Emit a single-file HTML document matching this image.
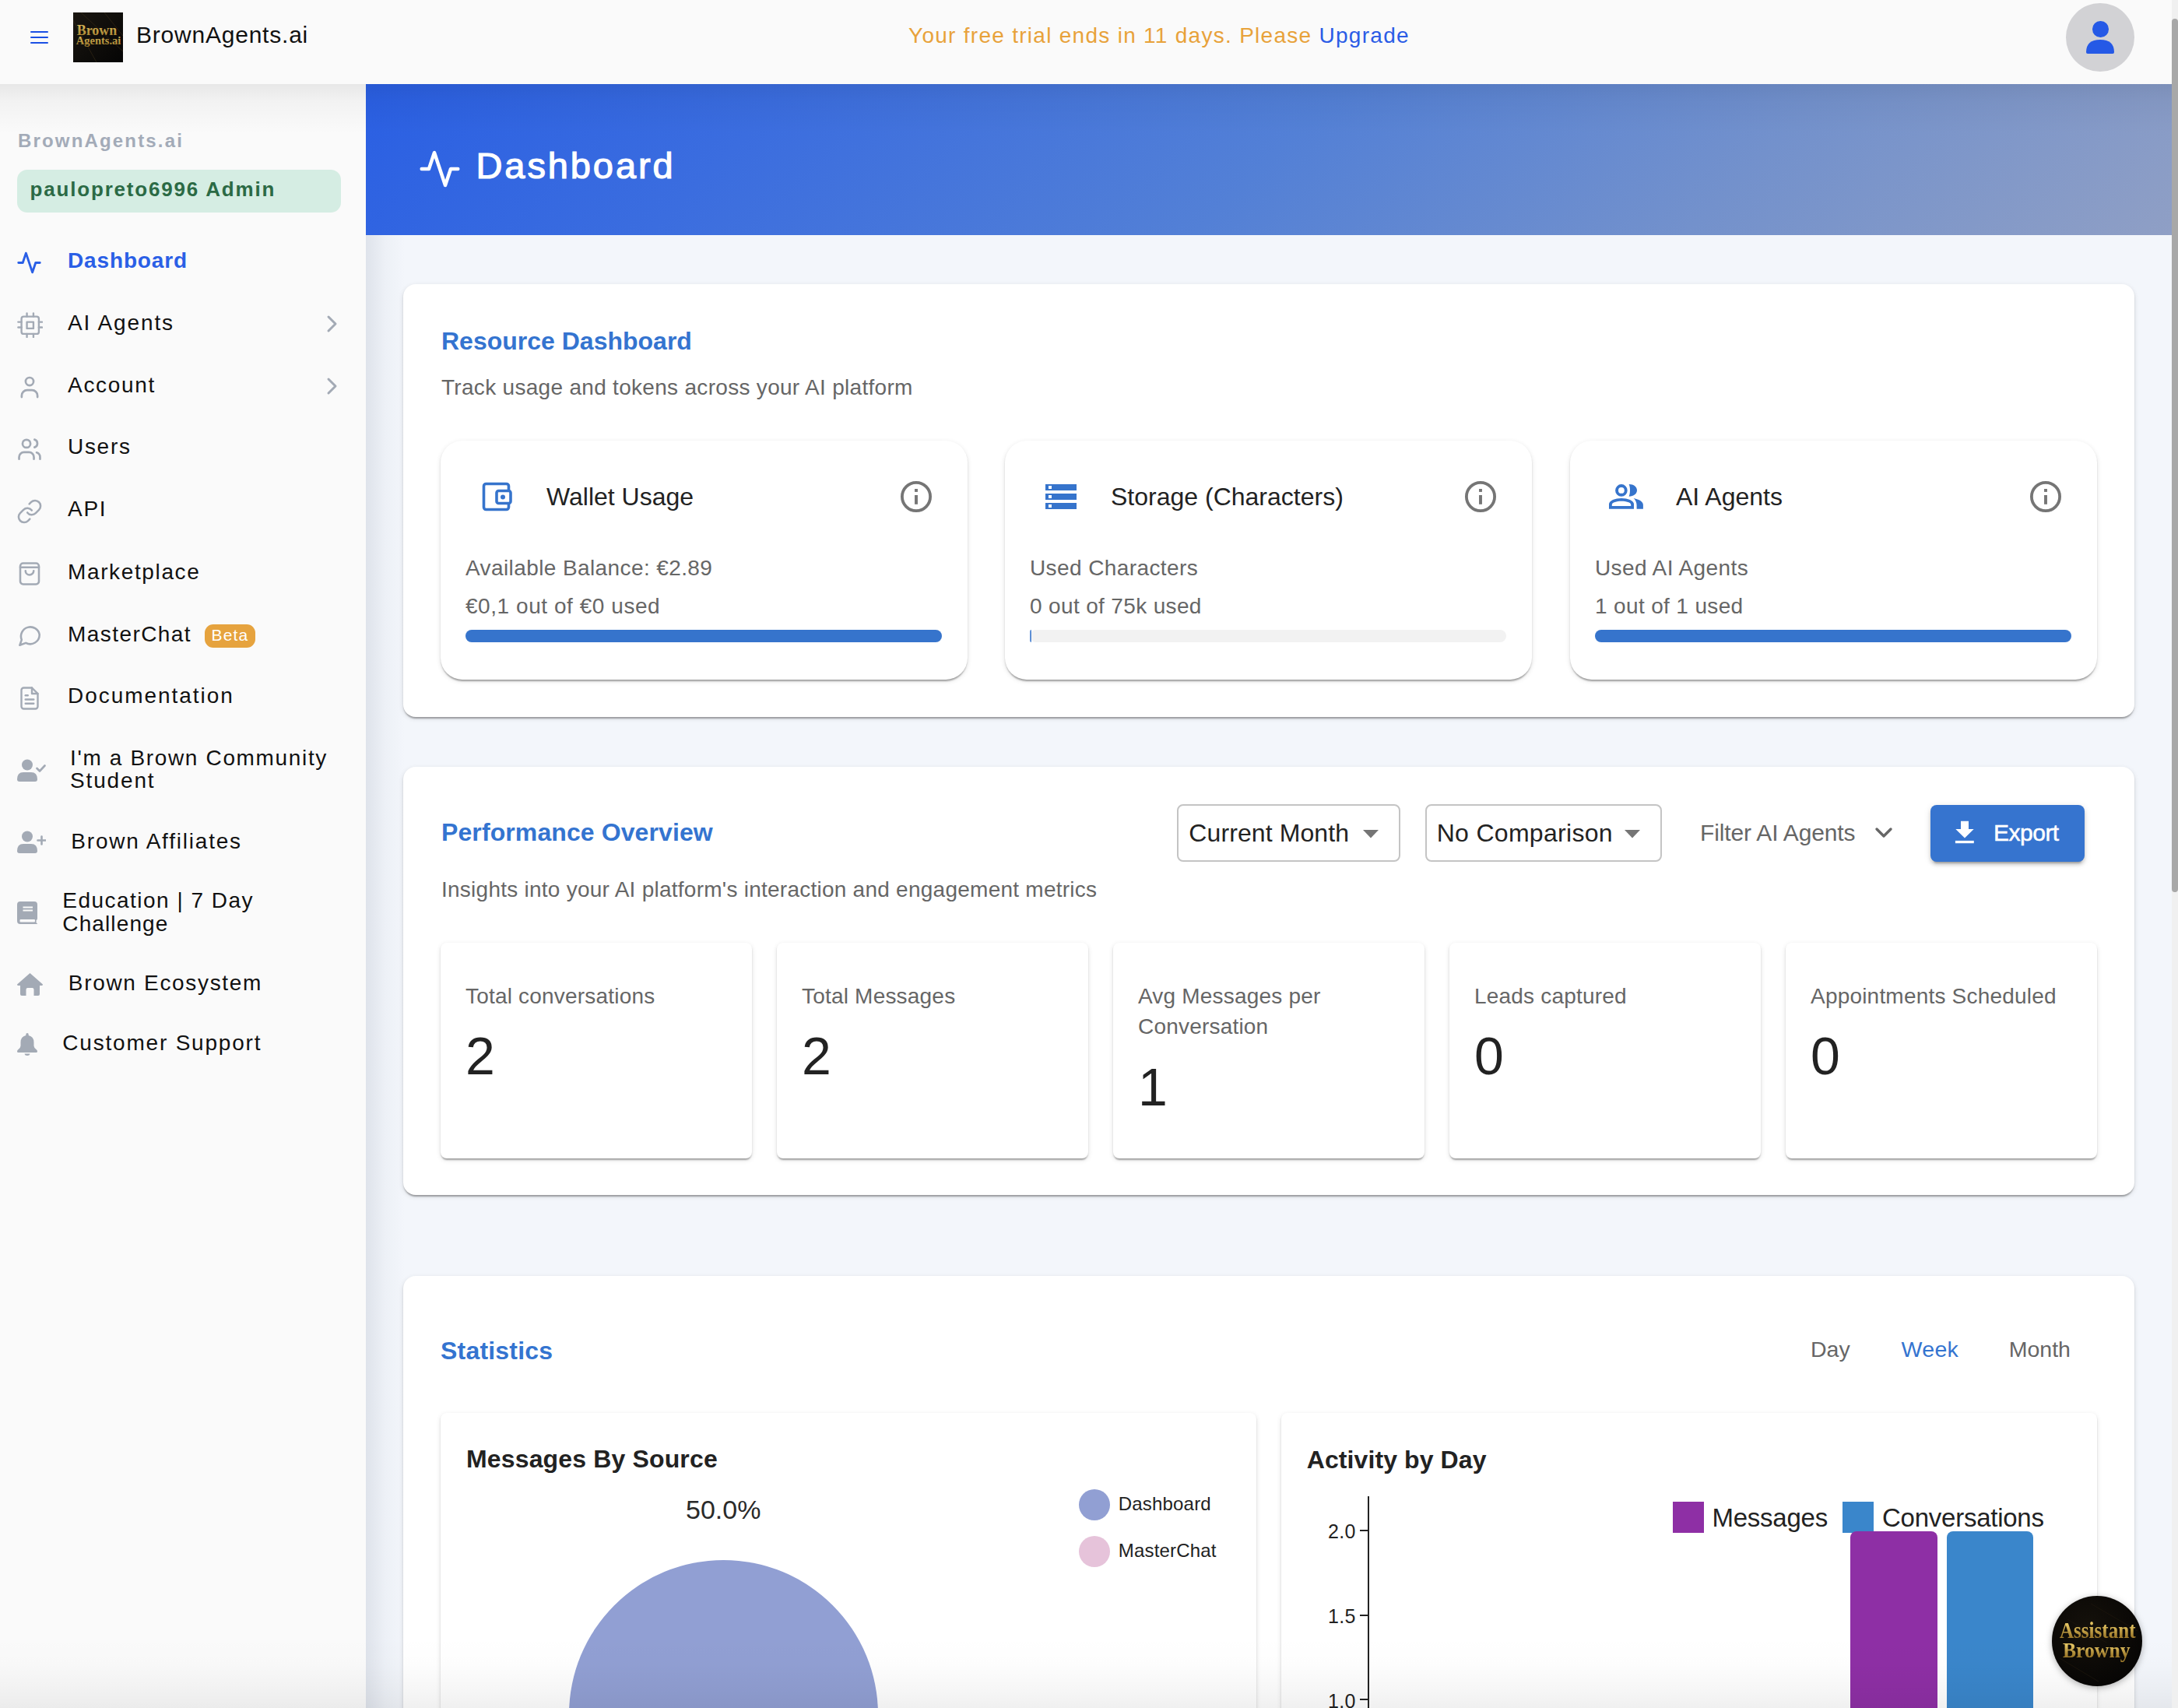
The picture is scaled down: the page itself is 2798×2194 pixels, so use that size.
<!DOCTYPE html>
<html><head><meta charset="utf-8"><title>BrownAgents.ai Dashboard</title>
<style>
html,body{margin:0;padding:0;width:2798px;height:2194px;overflow:hidden;background:#f3f6fb;font-family:"Liberation Sans",sans-serif;}
.t{position:absolute;white-space:nowrap;}
</style></head><body>
<div style="position:absolute;left:0px;top:0px;width:2798px;height:108px;background:#fafafa;"></div>
<div style="position:absolute;left:38.5px;top:39.85px;width:23px;height:2.3px;background:#1a4fe4;border-radius:1.2px;"></div>
<div style="position:absolute;left:38.5px;top:46.85px;width:23px;height:2.3px;background:#1a4fe4;border-radius:1.2px;"></div>
<div style="position:absolute;left:38.5px;top:53.85px;width:23px;height:2.3px;background:#1a4fe4;border-radius:1.2px;"></div>
<svg style="position:absolute;left:94px;top:16px;" width="64" height="64" viewBox="0 0 64 64"><defs><linearGradient id="lg" x1="0" y1="0" x2="1" y2="1"><stop offset="0" stop-color="#1a1610"/><stop offset="1" stop-color="#050505"/></linearGradient><linearGradient id="gold" x1="0" y1="0" x2="0" y2="1"><stop offset="0" stop-color="#e2c25e"/><stop offset="1" stop-color="#a07c2c"/></linearGradient></defs><rect width="64" height="64" fill="url(#lg)"/><path d="M0 10 L30 64 M40 0 L64 30 M10 0 L64 50" stroke="#3a2e18" stroke-width="0.6" fill="none"/><text x="4.7" y="28.9" font-family="Liberation Serif" font-weight="bold" font-size="18.5" fill="url(#gold)" textLength="51.5" lengthAdjust="spacingAndGlyphs">Brown</text><text x="3.8" y="40.8" font-family="Liberation Serif" font-weight="bold" font-size="15" fill="url(#gold)" textLength="57.5" lengthAdjust="spacingAndGlyphs">Agents.ai</text></svg>
<div class="t" style="left:175.0px;top:30.4px;font-size:30px;line-height:30px;color:#111;font-weight:400;letter-spacing:0.78px;font-family:'Liberation Sans',sans-serif;">BrownAgents.ai</div>
<div class="t" style="left:1167.0px;top:32.3px;font-size:28px;line-height:28px;color:#e8a23a;font-weight:400;letter-spacing:1.28px;font-family:'Liberation Sans',sans-serif;">Your free trial ends in 11 days. Please <span style="color:#2b5ce6">Upgrade</span></div>
<div style="position:absolute;left:2654px;top:4px;width:88px;height:88px;background:#d2d2d5;border-radius:50%;"></div>
<div style="position:absolute;left:2688px;top:27px;width:20.5px;height:20.5px;background:#2559e6;border-radius:50%;"></div>
<svg style="position:absolute;left:2680px;top:51px;" width="36" height="18" viewBox="0 0 36 18"><path d="M0 16 Q0 0 18 0 Q36 0 36 16 Q36 18 34 18 L2 18 Q0 18 0 16Z" fill="#2559e6"/></svg>
<div style="position:absolute;left:470px;top:108px;width:2320px;height:2086px;background:#f3f6fb;"></div>
<div style="position:absolute;left:470px;top:108px;width:50px;height:2086px;background:linear-gradient(90deg,rgba(140,150,170,0.2),rgba(140,150,170,0.06) 50%,rgba(140,150,170,0));"></div>
<div style="position:absolute;left:470px;top:108px;width:2320px;height:194px;background:linear-gradient(135deg,#2a5fe3 0%,#3b6ddf 22%,#5380d6 50%,#7391cc 75%,#8f9fc5 100%);"></div>
<svg style="position:absolute;left:537px;top:189px;" width="56" height="56" viewBox="0 0 24 24"><polyline points="22 12 18 12 15 21 9 3 6 12 2 12" fill="none" stroke="#fff" stroke-width="1.9" stroke-linecap="round" stroke-linejoin="round"/></svg>
<div class="t" style="left:611.5px;top:188.7px;font-size:47px;line-height:47px;color:#fff;font-weight:400;letter-spacing:2.9px;font-family:'Liberation Sans',sans-serif;-webkit-text-stroke:1.2px #fff;">Dashboard</div>
<div style="position:absolute;left:518px;top:365px;width:2224px;height:556px;background:#fff;border-radius:16px;box-shadow:0 4px 2px -2px rgba(0,0,0,0.2),0 2px 2px 0 rgba(0,0,0,0.14),0 2px 6px 0 rgba(0,0,0,0.12);"></div>
<div class="t" style="left:567.0px;top:421.9px;font-size:32px;line-height:32px;color:#3474d0;font-weight:700;letter-spacing:0px;font-family:'Liberation Sans',sans-serif;">Resource Dashboard</div>
<div class="t" style="left:567.0px;top:484.3px;font-size:28px;line-height:28px;color:#666;font-weight:400;letter-spacing:0.3px;font-family:'Liberation Sans',sans-serif;">Track usage and tokens across your AI platform</div>
<div style="position:absolute;left:566px;top:566px;width:677px;height:307px;background:#fff;border-radius:28px;box-shadow:0 4px 2px -2px rgba(0,0,0,0.2),0 2px 2px 0 rgba(0,0,0,0.14),0 2px 6px 0 rgba(0,0,0,0.12);"></div>
<div class="t" style="left:702.0px;top:621.9px;font-size:32px;line-height:32px;color:#222;font-weight:400;letter-spacing:0px;font-family:'Liberation Sans',sans-serif;">Wallet Usage</div>
<svg style="position:absolute;left:1155px;top:616px;" width="44" height="44" viewBox="0 0 44 44"><circle cx="22" cy="22" r="18.1" fill="none" stroke="#757575" stroke-width="3.8"/><rect x="20.05" y="12" width="3.9" height="3.9" fill="#757575"/><rect x="20.05" y="20" width="3.9" height="11.8" fill="#757575"/></svg>
<div class="t" style="left:598.0px;top:716.3px;font-size:28px;line-height:28px;color:#666;font-weight:400;letter-spacing:0.4px;font-family:'Liberation Sans',sans-serif;">Available Balance: €2.89</div>
<div class="t" style="left:598.0px;top:765.3px;font-size:28px;line-height:28px;color:#666;font-weight:400;letter-spacing:0.55px;font-family:'Liberation Sans',sans-serif;">€0,1 out of €0 used</div>
<div style="position:absolute;left:598px;top:809px;width:612px;height:16px;background:#f2f2f2;border-radius:8px;overflow:hidden;"></div>
<div style="position:absolute;left:598px;top:809px;width:612px;height:16px;background:#3674cc;border-radius:8px;"></div>
<div style="position:absolute;left:1291px;top:566px;width:677px;height:307px;background:#fff;border-radius:28px;box-shadow:0 4px 2px -2px rgba(0,0,0,0.2),0 2px 2px 0 rgba(0,0,0,0.14),0 2px 6px 0 rgba(0,0,0,0.12);"></div>
<div class="t" style="left:1427.0px;top:621.9px;font-size:32px;line-height:32px;color:#222;font-weight:400;letter-spacing:0px;font-family:'Liberation Sans',sans-serif;">Storage (Characters)</div>
<svg style="position:absolute;left:1880px;top:616px;" width="44" height="44" viewBox="0 0 44 44"><circle cx="22" cy="22" r="18.1" fill="none" stroke="#757575" stroke-width="3.8"/><rect x="20.05" y="12" width="3.9" height="3.9" fill="#757575"/><rect x="20.05" y="20" width="3.9" height="11.8" fill="#757575"/></svg>
<div class="t" style="left:1323.0px;top:716.3px;font-size:28px;line-height:28px;color:#666;font-weight:400;letter-spacing:0.4px;font-family:'Liberation Sans',sans-serif;">Used Characters</div>
<div class="t" style="left:1323.0px;top:765.3px;font-size:28px;line-height:28px;color:#666;font-weight:400;letter-spacing:0.35px;font-family:'Liberation Sans',sans-serif;">0 out of 75k used</div>
<div style="position:absolute;left:1323px;top:809px;width:612px;height:16px;background:#f2f2f2;border-radius:8px;overflow:hidden;"></div>
<div style="position:absolute;left:1323px;top:809px;width:2px;height:16px;background:#3674cc;border-radius:2px 0 0 2px;opacity:0.8;"></div>
<div style="position:absolute;left:2017px;top:566px;width:677px;height:307px;background:#fff;border-radius:28px;box-shadow:0 4px 2px -2px rgba(0,0,0,0.2),0 2px 2px 0 rgba(0,0,0,0.14),0 2px 6px 0 rgba(0,0,0,0.12);"></div>
<div class="t" style="left:2153.0px;top:621.9px;font-size:32px;line-height:32px;color:#222;font-weight:400;letter-spacing:0px;font-family:'Liberation Sans',sans-serif;">AI Agents</div>
<svg style="position:absolute;left:2606px;top:616px;" width="44" height="44" viewBox="0 0 44 44"><circle cx="22" cy="22" r="18.1" fill="none" stroke="#757575" stroke-width="3.8"/><rect x="20.05" y="12" width="3.9" height="3.9" fill="#757575"/><rect x="20.05" y="20" width="3.9" height="11.8" fill="#757575"/></svg>
<div class="t" style="left:2049.0px;top:716.3px;font-size:28px;line-height:28px;color:#666;font-weight:400;letter-spacing:0.4px;font-family:'Liberation Sans',sans-serif;">Used AI Agents</div>
<div class="t" style="left:2049.0px;top:765.3px;font-size:28px;line-height:28px;color:#666;font-weight:400;letter-spacing:0.35px;font-family:'Liberation Sans',sans-serif;">1 out of 1 used</div>
<div style="position:absolute;left:2049px;top:809px;width:612px;height:16px;background:#f2f2f2;border-radius:8px;overflow:hidden;"></div>
<div style="position:absolute;left:2049px;top:809px;width:612px;height:16px;background:#3674cc;border-radius:8px;"></div>
<svg style="position:absolute;left:618px;top:618px;" width="42" height="42" viewBox="0 0 42 42"><rect x="3.5" y="3.5" width="32" height="33" rx="3" fill="none" stroke="#3674cc" stroke-width="3.6"/><rect x="20" y="12.5" width="18" height="16" rx="2.5" fill="#fff" stroke="#3674cc" stroke-width="3.6"/><circle cx="28" cy="20.5" r="3" fill="#3674cc"/></svg>
<svg style="position:absolute;left:1343px;top:622px;" width="40" height="32" viewBox="0 0 40 32"><g fill="#3674cc"><rect x="0" y="0" width="40" height="8"/><rect x="0" y="12" width="40" height="8"/><rect x="0" y="24" width="40" height="8"/></g><g fill="#fff"><rect x="4" y="2" width="4" height="4"/><rect x="4" y="14" width="4" height="4"/><rect x="4" y="26" width="4" height="4"/></g></svg>
<svg style="position:absolute;left:2066px;top:621px;" width="46" height="35" viewBox="0 0 46 35"><g fill="#3674cc" fill-rule="evenodd"><circle cx="16.9" cy="8.9" r="5.85" fill="none" stroke="#3674cc" stroke-width="3.9"/><path d="M1 32.8 V26.5 C1 22 9 19 17 19 C25 19 33 22 33 26.5 V32.8 Z M4.8 29 V27.3 C4.8 24.5 11 22.8 17 22.8 C23 22.8 29.2 24.5 29.2 27.3 V29 Z"/><path d="M26.6 1 C33 1 37 4.5 37 8.85 C37 13.2 33 16.7 26.6 16.7 C28.5 13 28.5 4.7 26.6 1Z"/><path d="M32.7 19 C40 20.5 44.9 23.5 44.9 27.5 V32.8 H36.6 V28 C36.6 24.5 35 21 32.7 19Z"/></g></svg>
<div style="position:absolute;left:518px;top:985px;width:2224px;height:550px;background:#fff;border-radius:16px;box-shadow:0 4px 2px -2px rgba(0,0,0,0.2),0 2px 2px 0 rgba(0,0,0,0.14),0 2px 6px 0 rgba(0,0,0,0.12);"></div>
<div class="t" style="left:567.0px;top:1053.1px;font-size:32px;line-height:32px;color:#3474d0;font-weight:700;letter-spacing:0.1px;font-family:'Liberation Sans',sans-serif;">Performance Overview</div>
<div class="t" style="left:567.0px;top:1129.2px;font-size:28px;line-height:28px;color:#666;font-weight:400;letter-spacing:0.25px;font-family:'Liberation Sans',sans-serif;">Insights into your AI platform's interaction and engagement metrics</div>
<div style="position:absolute;left:1512px;top:1033px;width:287px;height:74px;box-sizing:border-box;border:2px solid #c4c4c4;border-radius:8px;background:#fff;"></div>
<div class="t" style="left:1527.3px;top:1054.0px;font-size:32px;line-height:32px;color:#222;font-weight:400;letter-spacing:0.1px;font-family:'Liberation Sans',sans-serif;">Current Month</div>
<svg style="position:absolute;left:1751px;top:1066px;" width="20" height="11" viewBox="0 0 20 11"><polygon points="0,0 20,0 10,10.5" fill="#757575"/></svg>
<div style="position:absolute;left:1831px;top:1033px;width:304px;height:74px;box-sizing:border-box;border:2px solid #c4c4c4;border-radius:8px;background:#fff;"></div>
<div class="t" style="left:1845.7px;top:1054.0px;font-size:32px;line-height:32px;color:#222;font-weight:400;letter-spacing:0.3px;font-family:'Liberation Sans',sans-serif;">No Comparison</div>
<svg style="position:absolute;left:2087px;top:1066px;" width="20" height="11" viewBox="0 0 20 11"><polygon points="0,0 20,0 10,10.5" fill="#757575"/></svg>
<div class="t" style="left:2184.0px;top:1055.2px;font-size:30px;line-height:30px;color:#666;font-weight:400;letter-spacing:-0.15px;font-family:'Liberation Sans',sans-serif;">Filter AI Agents</div>
<svg style="position:absolute;left:2408px;top:1062px;" width="24" height="16" viewBox="0 0 24 16"><polyline points="3,3 12,12 21,3" fill="none" stroke="#666" stroke-width="3.4" stroke-linecap="round" stroke-linejoin="round"/></svg>
<div style="position:absolute;left:2480px;top:1034px;width:198px;height:73px;background:#3674cf;border-radius:8px;box-shadow:0 6px 2px -4px rgba(0,0,0,0.2),0 4px 4px 0 rgba(0,0,0,0.14),0 2px 10px 0 rgba(0,0,0,0.12);"></div>
<svg style="position:absolute;left:2510px;top:1054px;" width="28" height="30" viewBox="0 0 28 30"><g fill="#fff"><path d="M9 0.8 H19 V11 H25.7 L14 22.5 L2.3 11 H9Z"/><rect x="1.9" y="25.9" width="23.9" height="3.3"/></g></svg>
<div class="t" style="left:2561.0px;top:1055.2px;font-size:30px;line-height:30px;color:#fff;font-weight:400;letter-spacing:-0.5px;font-family:'Liberation Sans',sans-serif;-webkit-text-stroke:0.5px #fff;">Export</div>
<div style="position:absolute;left:566px;top:1211px;width:400px;height:277px;background:#fff;border-radius:8px;box-shadow:0 4px 2px -2px rgba(0,0,0,0.2),0 2px 2px 0 rgba(0,0,0,0.14),0 2px 6px 0 rgba(0,0,0,0.12);"></div>
<div class="t" style="left:598.0px;top:1266.3px;font-size:28px;line-height:28px;color:#666;font-weight:400;letter-spacing:0.2px;font-family:'Liberation Sans',sans-serif;">Total conversations</div>
<div class="t" style="left:598.0px;top:1322.4px;font-size:68px;line-height:68px;color:#222;font-weight:400;letter-spacing:0px;font-family:'Liberation Sans',sans-serif;">2</div>
<div style="position:absolute;left:998px;top:1211px;width:400px;height:277px;background:#fff;border-radius:8px;box-shadow:0 4px 2px -2px rgba(0,0,0,0.2),0 2px 2px 0 rgba(0,0,0,0.14),0 2px 6px 0 rgba(0,0,0,0.12);"></div>
<div class="t" style="left:1030.0px;top:1266.3px;font-size:28px;line-height:28px;color:#666;font-weight:400;letter-spacing:0.2px;font-family:'Liberation Sans',sans-serif;">Total Messages</div>
<div class="t" style="left:1030.0px;top:1322.4px;font-size:68px;line-height:68px;color:#222;font-weight:400;letter-spacing:0px;font-family:'Liberation Sans',sans-serif;">2</div>
<div style="position:absolute;left:1430px;top:1211px;width:400px;height:277px;background:#fff;border-radius:8px;box-shadow:0 4px 2px -2px rgba(0,0,0,0.2),0 2px 2px 0 rgba(0,0,0,0.14),0 2px 6px 0 rgba(0,0,0,0.12);"></div>
<div class="t" style="left:1462.0px;top:1266.3px;font-size:28px;line-height:28px;color:#666;font-weight:400;letter-spacing:0.2px;font-family:'Liberation Sans',sans-serif;">Avg Messages per</div>
<div class="t" style="left:1462.0px;top:1305.3px;font-size:28px;line-height:28px;color:#666;font-weight:400;letter-spacing:0.2px;font-family:'Liberation Sans',sans-serif;">Conversation</div>
<div class="t" style="left:1462.0px;top:1362.2px;font-size:68px;line-height:68px;color:#222;font-weight:400;letter-spacing:0px;font-family:'Liberation Sans',sans-serif;">1</div>
<div style="position:absolute;left:1862px;top:1211px;width:400px;height:277px;background:#fff;border-radius:8px;box-shadow:0 4px 2px -2px rgba(0,0,0,0.2),0 2px 2px 0 rgba(0,0,0,0.14),0 2px 6px 0 rgba(0,0,0,0.12);"></div>
<div class="t" style="left:1894.0px;top:1266.3px;font-size:28px;line-height:28px;color:#666;font-weight:400;letter-spacing:0.2px;font-family:'Liberation Sans',sans-serif;">Leads captured</div>
<div class="t" style="left:1894.0px;top:1322.4px;font-size:68px;line-height:68px;color:#222;font-weight:400;letter-spacing:0px;font-family:'Liberation Sans',sans-serif;">0</div>
<div style="position:absolute;left:2294px;top:1211px;width:400px;height:277px;background:#fff;border-radius:8px;box-shadow:0 4px 2px -2px rgba(0,0,0,0.2),0 2px 2px 0 rgba(0,0,0,0.14),0 2px 6px 0 rgba(0,0,0,0.12);"></div>
<div class="t" style="left:2326.0px;top:1266.3px;font-size:28px;line-height:28px;color:#666;font-weight:400;letter-spacing:0.2px;font-family:'Liberation Sans',sans-serif;">Appointments Scheduled</div>
<div class="t" style="left:2326.0px;top:1322.4px;font-size:68px;line-height:68px;color:#222;font-weight:400;letter-spacing:0px;font-family:'Liberation Sans',sans-serif;">0</div>
<div style="position:absolute;left:518px;top:1639px;width:2224px;height:700px;background:#fff;border-radius:16px;box-shadow:0 4px 2px -2px rgba(0,0,0,0.2),0 2px 2px 0 rgba(0,0,0,0.14),0 2px 6px 0 rgba(0,0,0,0.12);"></div>
<div class="t" style="left:566.0px;top:1718.7px;font-size:32px;line-height:32px;color:#3474d0;font-weight:700;letter-spacing:0.2px;font-family:'Liberation Sans',sans-serif;">Statistics</div>
<div class="t" style="left:2326.0px;top:1719.4px;font-size:28.5px;line-height:28.5px;color:#666;font-weight:400;letter-spacing:0px;font-family:'Liberation Sans',sans-serif;">Day</div>
<div class="t" style="left:2442.6px;top:1719.4px;font-size:28.5px;line-height:28.5px;color:#3474d0;font-weight:400;letter-spacing:0.3px;font-family:'Liberation Sans',sans-serif;">Week</div>
<div class="t" style="left:2580.7px;top:1719.4px;font-size:28.5px;line-height:28.5px;color:#666;font-weight:400;letter-spacing:0px;font-family:'Liberation Sans',sans-serif;">Month</div>
<div style="position:absolute;left:566px;top:1815px;width:1048px;height:600px;background:#fff;border-radius:8px;box-shadow:0 4px 2px -2px rgba(0,0,0,0.2),0 2px 2px 0 rgba(0,0,0,0.14),0 2px 6px 0 rgba(0,0,0,0.12);"></div>
<div style="position:absolute;left:1646px;top:1815px;width:1048px;height:600px;background:#fff;border-radius:8px;box-shadow:0 4px 2px -2px rgba(0,0,0,0.2),0 2px 2px 0 rgba(0,0,0,0.14),0 2px 6px 0 rgba(0,0,0,0.12);"></div>
<div class="t" style="left:599.0px;top:1857.9px;font-size:32px;line-height:32px;color:#222;font-weight:700;letter-spacing:0.15px;font-family:'Liberation Sans',sans-serif;">Messages By Source</div>
<div class="t" style="left:881.0px;top:1922.2px;font-size:34px;line-height:34px;color:#2a2a2a;font-weight:400;letter-spacing:0px;font-family:'Liberation Sans',sans-serif;">50.0%</div>
<div style="position:absolute;left:1386px;top:1913px;width:40px;height:40px;background:#919fd3;border-radius:50%;"></div>
<div class="t" style="left:1436.7px;top:1920.0px;font-size:24px;line-height:24px;color:#222;font-weight:400;letter-spacing:0.2px;font-family:'Liberation Sans',sans-serif;">Dashboard</div>
<div style="position:absolute;left:1386px;top:1973px;width:40px;height:40px;background:#e6c3da;border-radius:50%;"></div>
<div class="t" style="left:1436.7px;top:1980.2px;font-size:24px;line-height:24px;color:#222;font-weight:400;letter-spacing:0.2px;font-family:'Liberation Sans',sans-serif;">MasterChat</div>
<div style="position:absolute;left:731px;top:2004px;width:397px;height:397px;background:#919fd3;border-radius:50%;"></div>
<div class="t" style="left:1678.7px;top:1859.4px;font-size:32px;line-height:32px;color:#222;font-weight:700;letter-spacing:0.1px;font-family:'Liberation Sans',sans-serif;">Activity by Day</div>
<div style="position:absolute;left:1757px;top:1922px;width:2px;height:300px;background:#222;"></div>
<div style="position:absolute;left:1747px;top:1964.6px;width:11px;height:2px;background:#222;"></div>
<div class="t" style="left:1706.0px;top:1954.7px;font-size:25px;line-height:25px;color:#222;font-weight:400;letter-spacing:0.3px;font-family:'Liberation Sans',sans-serif;">2.0</div>
<div style="position:absolute;left:1747px;top:2073.5px;width:11px;height:2px;background:#222;"></div>
<div class="t" style="left:1706.0px;top:2063.6px;font-size:25px;line-height:25px;color:#222;font-weight:400;letter-spacing:0.3px;font-family:'Liberation Sans',sans-serif;">1.5</div>
<div style="position:absolute;left:1747px;top:2182.4px;width:11px;height:2px;background:#222;"></div>
<div class="t" style="left:1706.0px;top:2172.5px;font-size:25px;line-height:25px;color:#222;font-weight:400;letter-spacing:0.3px;font-family:'Liberation Sans',sans-serif;">1.0</div>
<div style="position:absolute;left:2149px;top:1929px;width:40px;height:40px;background:#8e2fa5;"></div>
<div class="t" style="left:2199.5px;top:1933.1px;font-size:33px;line-height:33px;color:#222;font-weight:400;letter-spacing:-0.25px;font-family:'Liberation Sans',sans-serif;">Messages</div>
<div style="position:absolute;left:2367px;top:1929px;width:40px;height:40px;background:#3a86cb;"></div>
<div class="t" style="left:2418.0px;top:1933.1px;font-size:33px;line-height:33px;color:#222;font-weight:400;letter-spacing:-0.25px;font-family:'Liberation Sans',sans-serif;">Conversations</div>
<div style="position:absolute;left:2377px;top:1967px;width:112px;height:300px;background:#8e2fa5;border-radius:8px 8px 0 0;"></div>
<div style="position:absolute;left:2501px;top:1967px;width:111px;height:300px;background:#3a86cb;border-radius:8px 8px 0 0;"></div>
<svg style="position:absolute;left:2636px;top:2050px;filter:drop-shadow(0 2px 4px rgba(0,0,0,0.3));" width="116" height="116" viewBox="0 0 116 116"><defs><radialGradient id="bg2" cx="0.4" cy="0.35" r="0.7"><stop offset="0" stop-color="#15110b"/><stop offset="1" stop-color="#060504"/></radialGradient><linearGradient id="gold2" x1="0" y1="0" x2="0" y2="1"><stop offset="0.3" stop-color="#e2c260"/><stop offset="0.75" stop-color="#a07c2c"/></linearGradient></defs><circle cx="58" cy="58" r="58" fill="url(#bg2)"/><path d="M20 30 L70 60 M50 10 L110 45 M10 80 L60 110" stroke="#1e170d" stroke-width="0.7" fill="none"/><text x="10" y="54" font-family="Liberation Serif" font-weight="bold" font-size="29" fill="url(#gold2)" textLength="97.5" lengthAdjust="spacingAndGlyphs">Assistant</text><text x="14" y="78.5" font-family="Liberation Serif" font-weight="bold" font-size="27" fill="url(#gold2)" textLength="86.5" lengthAdjust="spacingAndGlyphs">Browny</text></svg>
<div style="position:absolute;left:0px;top:108px;width:470px;height:2086px;background:#fafafa;"></div>
<div class="t" style="left:23.0px;top:169.2px;font-size:24px;line-height:24px;color:#a3abb8;font-weight:700;letter-spacing:2.17px;font-family:'Liberation Sans',sans-serif;">BrownAgents.ai</div>
<div style="position:absolute;left:22px;top:218px;width:416px;height:55px;background:#d5ede3;border-radius:13px;"></div>
<div class="t" style="left:38.6px;top:230.4px;font-size:26px;line-height:26px;color:#2b6a45;font-weight:700;letter-spacing:1.81px;font-family:'Liberation Sans',sans-serif;">paulopreto6996 Admin</div>
<svg style="position:absolute;left:21px;top:321px;" width="33" height="33" viewBox="0 0 24 24"><g fill="none" stroke="#2a5fe6" stroke-width="2.1" stroke-linecap="round" stroke-linejoin="round"><polyline points="22 12 18 12 15 21 9 3 6 12 2 12"/></g></svg>
<div class="t" style="left:87.0px;top:321.3px;font-size:28px;line-height:28px;color:#2a5fe6;font-weight:700;letter-spacing:0.86px;font-family:'Liberation Sans',sans-serif;">Dashboard</div>
<svg style="position:absolute;left:21.5px;top:400.5px;" width="33.5" height="33.5" viewBox="0 0 24 24"><g fill="none" stroke="#a3aab5" stroke-width="1.7" stroke-linecap="round" stroke-linejoin="round"><rect x="4" y="4" width="16" height="16" rx="2"/><rect x="9" y="9" width="6" height="6"/><line x1="9" y1="1" x2="9" y2="4"/><line x1="15" y1="1" x2="15" y2="4"/><line x1="9" y1="20" x2="9" y2="23"/><line x1="15" y1="20" x2="15" y2="23"/><line x1="20" y1="9" x2="23" y2="9"/><line x1="20" y1="14" x2="23" y2="14"/><line x1="1" y1="9" x2="4" y2="9"/><line x1="1" y1="14" x2="4" y2="14"/></g></svg>
<div class="t" style="left:87.0px;top:401.3px;font-size:28px;line-height:28px;color:#111;font-weight:400;letter-spacing:1.9px;font-family:'Liberation Sans',sans-serif;">AI Agents</div>
<svg style="position:absolute;left:418px;top:404px;" width="18" height="24" viewBox="0 0 18 24"><polyline points="4,3 13,12 4,21" fill="none" stroke="#a3aab5" stroke-width="3" stroke-linecap="round" stroke-linejoin="round"/></svg>
<svg style="position:absolute;left:19px;top:479px;" width="38" height="38" viewBox="0 0 24 24"><g fill="none" stroke="#a3aab5" stroke-width="1.7" stroke-linecap="round" stroke-linejoin="round"><circle cx="12" cy="7" r="3.2"/><path d="M5.6 19.6v-1.2a4.4 4.4 0 0 1 4.4-4.4h4a4.4 4.4 0 0 1 4.4 4.4v1.2"/></g></svg>
<div class="t" style="left:87.0px;top:481.3px;font-size:28px;line-height:28px;color:#111;font-weight:400;letter-spacing:1.7px;font-family:'Liberation Sans',sans-serif;">Account</div>
<svg style="position:absolute;left:418px;top:484px;" width="18" height="24" viewBox="0 0 18 24"><polyline points="4,3 13,12 4,21" fill="none" stroke="#a3aab5" stroke-width="3" stroke-linecap="round" stroke-linejoin="round"/></svg>
<svg style="position:absolute;left:19px;top:558px;" width="38" height="38" viewBox="0 0 24 24"><g fill="none" stroke="#a3aab5" stroke-width="1.7" stroke-linecap="round" stroke-linejoin="round"><circle cx="9.5" cy="7.5" r="3.2"/><path d="M3.5 20v-1.5a4 4 0 0 1 4-4h4a4 4 0 0 1 4 4v1.5"/><path d="M16 4.2a3.3 3.3 0 0 1 0 6.3"/><path d="M20.5 20v-1.5a4 4 0 0 0-2.8-3.8"/></g></svg>
<div class="t" style="left:87.0px;top:560.3px;font-size:28px;line-height:28px;color:#111;font-weight:400;letter-spacing:1.7px;font-family:'Liberation Sans',sans-serif;">Users</div>
<svg style="position:absolute;left:21px;top:640px;" width="34" height="34" viewBox="0 0 24 24"><g fill="none" stroke="#a3aab5" stroke-width="1.8" stroke-linecap="round" stroke-linejoin="round"><path d="M10 13a5 5 0 0 0 7.54.54l3-3a5 5 0 0 0-7.07-7.07l-1.72 1.71"/><path d="M14 11a5 5 0 0 0-7.54-.54l-3 3a5 5 0 0 0 7.07 7.07l1.71-1.71"/></g></svg>
<div class="t" style="left:87.0px;top:640.3px;font-size:28px;line-height:28px;color:#111;font-weight:400;letter-spacing:1.7px;font-family:'Liberation Sans',sans-serif;">API</div>
<svg style="position:absolute;left:20px;top:719px;" width="36" height="36" viewBox="0 0 24 24"><g fill="none" stroke="#a3aab5" stroke-width="1.7" stroke-linecap="round" stroke-linejoin="round"><rect x="4" y="3" width="16" height="18" rx="2.5"/><line x1="4" y1="6.5" x2="20" y2="6.5"/><path d="M15.5 9.5a3.5 3.5 0 0 1-7 0"/></g></svg>
<div class="t" style="left:87.0px;top:721.3px;font-size:28px;line-height:28px;color:#111;font-weight:400;letter-spacing:1.63px;font-family:'Liberation Sans',sans-serif;">Marketplace</div>
<svg style="position:absolute;left:20px;top:798px;" width="36" height="36" viewBox="0 0 24 24"><g fill="none" stroke="#a3aab5" stroke-width="1.7" stroke-linecap="round" stroke-linejoin="round"><path d="M20.5 11.5a8 8 0 0 1-11.7 7.1L3.6 20.5l1.6-4.6A8 8 0 1 1 20.5 11.5z"/></g></svg>
<div class="t" style="left:87.0px;top:800.9px;font-size:28px;line-height:28px;color:#111;font-weight:400;letter-spacing:1.43px;font-family:'Liberation Sans',sans-serif;">MasterChat</div>
<div style="position:absolute;left:263px;top:802px;width:65px;height:30px;background:#e6a33e;border-radius:11px;"></div>
<div class="t" style="left:271.5px;top:805.2px;font-size:21px;line-height:21px;color:#fff;font-weight:400;letter-spacing:1.2px;font-family:'Liberation Sans',sans-serif;">Beta</div>
<svg style="position:absolute;left:20px;top:879px;" width="36" height="36" viewBox="0 0 24 24"><g fill="none" stroke="#a3aab5" stroke-width="1.6" stroke-linecap="round" stroke-linejoin="round"><path d="M14 3H7a2 2 0 0 0-2 2v14a2 2 0 0 0 2 2h10a2 2 0 0 0 2-2V8z"/><polyline points="14 3 14 8 19 8"/><line x1="15.5" y1="13" x2="8.5" y2="13"/><line x1="15.5" y1="16.5" x2="8.5" y2="16.5"/><line x1="10.5" y1="9.5" x2="8.5" y2="9.5"/></g></svg>
<div class="t" style="left:87.0px;top:880.3px;font-size:28px;line-height:28px;color:#111;font-weight:400;letter-spacing:1.96px;font-family:'Liberation Sans',sans-serif;">Documentation</div>
<svg style="position:absolute;left:22px;top:975px;" width="37" height="30" viewBox="0 0 37 30"><g fill="#a3aab5"><circle cx="13" cy="7.5" r="7"/><path d="M0 26 Q0 17 8 17 L18 17 Q26 17 26 26 Q26 29 23 29 L3 29 Q0 29 0 26Z"/></g><polyline points="25.5,12 29,15.5 35.5,8.5" fill="none" stroke="#a3aab5" stroke-width="2.6" stroke-linecap="round" stroke-linejoin="round"/></svg>
<div class="t" style="left:90.0px;top:960.3px;font-size:28px;line-height:28px;color:#111;font-weight:400;letter-spacing:1.65px;font-family:'Liberation Sans',sans-serif;">I'm a Brown Community</div>
<div class="t" style="left:90.0px;top:988.9px;font-size:28px;line-height:28px;color:#111;font-weight:400;letter-spacing:1.85px;font-family:'Liberation Sans',sans-serif;">Student</div>
<svg style="position:absolute;left:22px;top:1067px;" width="37" height="30" viewBox="0 0 37 30"><g fill="#a3aab5"><circle cx="13" cy="7.5" r="7"/><path d="M0 26 Q0 17 8 17 L18 17 Q26 17 26 26 Q26 29 23 29 L3 29 Q0 29 0 26Z"/></g><path d="M31.5 7.5v10M26.5 12.5h10" fill="none" stroke="#a3aab5" stroke-width="2.6" stroke-linecap="round"/></svg>
<div class="t" style="left:91.3px;top:1066.6px;font-size:28px;line-height:28px;color:#111;font-weight:400;letter-spacing:1.79px;font-family:'Liberation Sans',sans-serif;">Brown Affiliates</div>
<svg style="position:absolute;left:22px;top:1158px;" width="26" height="29" viewBox="0 0 26 29"><path d="M4 0 H22 Q26 0 26 4 V22 Q26 23.5 24.6 24 V27.6 Q26 28 26 29 H4 Q0 29 0 25 V4 Q0 0 4 0Z" fill="#a3aab5"/><rect x="3.5" y="23" width="19.5" height="3.4" rx="1" fill="#f9f9f9"/><rect x="7.5" y="6.5" width="12.5" height="2" fill="#f9f9f9"/><rect x="7.5" y="10.5" width="12.5" height="2" fill="#f9f9f9"/></svg>
<div class="t" style="left:80.3px;top:1143.3px;font-size:28px;line-height:28px;color:#111;font-weight:400;letter-spacing:1.48px;font-family:'Liberation Sans',sans-serif;">Education | 7 Day</div>
<div class="t" style="left:80.3px;top:1172.6px;font-size:28px;line-height:28px;color:#111;font-weight:400;letter-spacing:1.12px;font-family:'Liberation Sans',sans-serif;">Challenge</div>
<svg style="position:absolute;left:22px;top:1250px;" width="33" height="30" viewBox="0 0 33 30"><path d="M16.5 0 L33 14.5 Q33 16 31.5 16 L29 16 L29 27 Q29 29 27 29 L21.5 29 L21.5 21 Q21.5 19 19.5 19 L13.5 19 Q11.5 19 11.5 21 L11.5 29 L6 29 Q4 29 4 27 L4 16 L1.5 16 Q0 16 0 14.5 Z" fill="#a3aab5"/></svg>
<div class="t" style="left:87.8px;top:1249.3px;font-size:28px;line-height:28px;color:#111;font-weight:400;letter-spacing:1.68px;font-family:'Liberation Sans',sans-serif;">Brown Ecosystem</div>
<svg style="position:absolute;left:22px;top:1327px;" width="26" height="29" viewBox="0 0 26 29"><g fill="#a3aab5"><path d="M13 0 Q14.7 0 14.7 1.8 L14.7 3 Q21.5 4.5 21.5 12 L21.5 16.5 Q21.5 19 25 21.5 Q26 22.5 26 23.5 Q26 25 24.5 25 L1.5 25 Q0 25 0 23.5 Q0 22.5 1 21.5 Q4.5 19 4.5 16.5 L4.5 12 Q4.5 4.5 11.3 3 L11.3 1.8 Q11.3 0 13 0Z"/><path d="M9.5 26.5 H16.5 Q16 29 13 29 Q10 29 9.5 26.5Z"/></g></svg>
<div class="t" style="left:80.3px;top:1326.3px;font-size:28px;line-height:28px;color:#111;font-weight:400;letter-spacing:1.8px;font-family:'Liberation Sans',sans-serif;">Customer Support</div>
<div style="position:absolute;left:0px;top:108px;width:2790px;height:64px;background:linear-gradient(rgba(0,0,0,0.075),rgba(0,0,0,0.03) 35%,rgba(0,0,0,0));"></div>
<div style="position:absolute;left:0px;top:2100px;width:2790px;height:94px;background:linear-gradient(rgba(0,0,0,0) 0%,rgba(0,0,0,0.008) 40%,rgba(0,0,0,0.03) 72%,rgba(0,0,0,0.06) 100%);"></div>
<div style="position:absolute;left:2790px;top:0px;width:8px;height:2194px;background:#f0f0f0;"></div>
<div style="position:absolute;left:2790px;top:24px;width:8px;height:1122px;background:#a8a8a8;border-radius:4px;"></div>
</body></html>
